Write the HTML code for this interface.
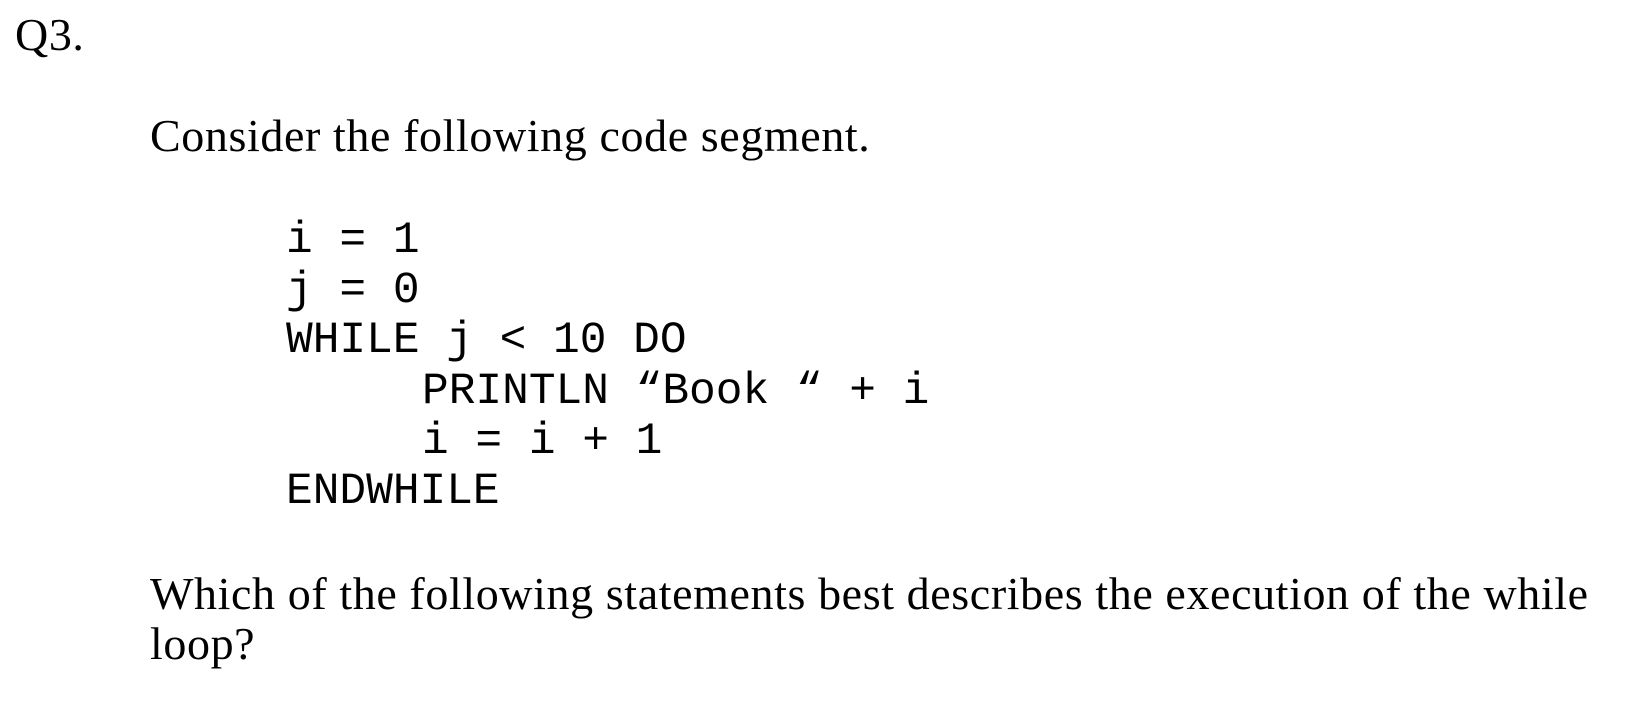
<!DOCTYPE html>
<html><head><meta charset="utf-8"><style>
html,body{margin:0;padding:0;background:#fff;width:1650px;height:706px;overflow:hidden}
.t{position:absolute;font-family:"Liberation Serif",serif;font-size:46px;letter-spacing:0.6px;color:#000;white-space:nowrap;line-height:1}
.c{position:absolute;font-family:"Liberation Mono","Courier New",monospace;font-size:44.5px;color:#000;white-space:pre;line-height:1}
</style></head><body>
<div class="t" style="left:15px;top:12px;">Q3.</div>
<div class="t" style="left:150px;top:113px;">Consider the following code segment.</div>
<div class="c" style="left:286px;top:219px;">i = 1</div>
<div class="c" style="left:286px;top:269px;">j = 0</div>
<div class="c" style="left:286px;top:319px;">WHILE j &lt; 10 DO</div>
<div class="c" style="left:422px;top:370px;">PRINTLN “Book “ + i</div>
<div class="c" style="left:422px;top:420px;">i = i + 1</div>
<div class="c" style="left:286px;top:470px;">ENDWHILE</div>
<div class="t" style="left:150px;top:571px;">Which of the following statements best describes the execution of the while</div>
<div class="t" style="left:150px;top:621px;">loop?</div>
</body></html>
